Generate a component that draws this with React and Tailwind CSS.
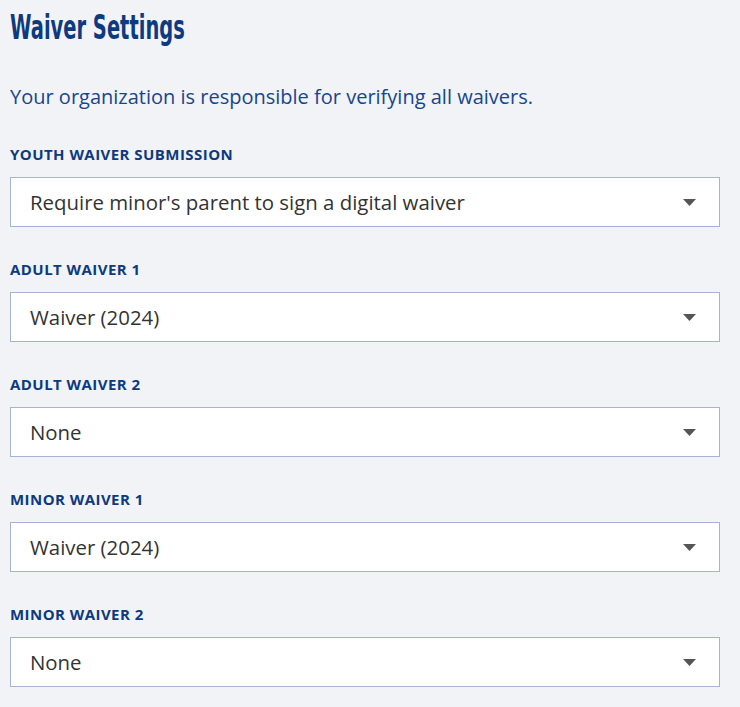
import React from 'react';

const fields = [
  { label: 'Youth Waiver Submission', value: "Require minor's parent to sign a digital waiver" },
  { label: 'Adult Waiver 1', value: 'Waiver (2024)' },
  { label: 'Adult Waiver 2', value: 'None' },
  { label: 'Minor Waiver 1', value: 'Waiver (2024)' },
  { label: 'Minor Waiver 2', value: 'None' },
];

function SelectBox({ value }) {
  return (
    <div className="h-[50px] w-[710px] bg-white border border-[#a3b4d4] flex items-center justify-between pl-[19px] pr-[23px]">
      <span className="text-[20.4px] text-[#333333]">{value}</span>
      <svg width="13" height="7" viewBox="0 0 13 7">
        <path d="M0 0 L13 0 L6.5 7 Z" fill="#555555" />
      </svg>
    </div>
  );
}

export default function App() {
  return (
    <div className="min-h-screen bg-[#f1f3f7] px-[10px] pt-[8px] font-['Open_Sans',sans-serif]">
      <h1 className="h-[40px] text-[33px] leading-[40px] font-bold text-[#0d3a80] font-['DejaVu_Sans',sans-serif] whitespace-nowrap">
        <span className="inline-block origin-left scale-x-[0.59]">Waiver Settings</span>
      </h1>
      <p className="mt-[35px] text-[20px] leading-[28px] text-[#17468c]">
        Your organization is responsible for verifying all waivers.
      </p>
      <div className="mt-[36px] flex flex-col gap-[35px]">
        {fields.map((f) => (
          <div key={f.label} className="flex flex-col gap-[15px]">
            <label className="text-[15px] leading-[15px] font-bold uppercase tracking-[0.03em] text-[#0d3a80]">
              {f.label}
            </label>
            <SelectBox value={f.value} />
          </div>
        ))}
      </div>
    </div>
  );
}
